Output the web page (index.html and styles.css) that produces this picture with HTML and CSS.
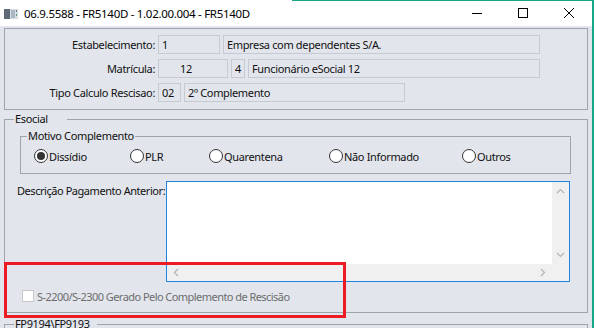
FILE: index.html
```html
<!DOCTYPE html>
<html lang="pt-BR">
<head>
    <meta charset="UTF-8">
    <title>FR5140D</title>
    <link rel="stylesheet" href="styles.css">
</head>
<body>
    <div class="window">
        <div class="titlebar">
            <svg class="app-icon" width="14" height="10" viewBox="0 0 14 10">
                <rect x="0" y="0" width="14" height="10" fill="#d9dde3"/>
                <rect x="0" y="0" width="6" height="10" fill="#5f6b78"/>
                <rect x="7" y="1" width="4" height="8" fill="#a9b7c6"/>
                <rect x="12" y="1" width="1" height="2" fill="#6d7c8c"/>
                <rect x="12" y="5" width="1" height="2" fill="#4fa06e"/>
            </svg>
            <span class="title">06.9.5588 - FR5140D - 1.02.00.004 - FR5140D</span>
            <div class="win-controls">
                <span class="ctl">
                    <svg width="10" height="10" viewBox="0 0 10 10"><path d="M0 5.5H10" stroke="#000" stroke-width="1"/></svg>
                </span>
                <span class="ctl">
                    <svg width="10" height="10" viewBox="0 0 10 10"><rect x="0.5" y="0.5" width="9" height="9" fill="none" stroke="#000" stroke-width="1"/></svg>
                </span>
                <span class="ctl">
                    <svg width="10" height="10" viewBox="0 0 10 10"><path d="M0 0L10 10M10 0L0 10" stroke="#000" stroke-width="1"/></svg>
                </span>
            </div>
        </div>

        <div class="client">
            <div class="panel-top">
                <div class="row">
                    <span class="lbl">Estabelecimento:</span>
                    <div class="field w-estab">1</div>
                    <div class="field w-empresa">Empresa com dependentes S/A.</div>
                </div>
                <div class="row">
                    <span class="lbl">Matrícula:</span>
                    <div class="field w-matric num">12</div>
                    <div class="field w-seq">4</div>
                    <div class="field w-func">Funcionário eSocial 12</div>
                </div>
                <div class="row">
                    <span class="lbl">Tipo Calculo Rescisao:</span>
                    <div class="field w-tipo">02</div>
                    <div class="field w-tipodesc">2º Complemento</div>
                </div>
            </div>

            <fieldset class="group esocial">
                <legend class="cap-esocial">Esocial</legend>

                <fieldset class="group motivo">
                    <legend class="cap-motivo">Motivo Complemento</legend>
                    <div class="radios">
                        <label class="radio checked"><span class="circle"></span>Dissídio</label>
                        <label class="radio"><span class="circle"></span>PLR</label>
                        <label class="radio"><span class="circle"></span>Quarentena</label>
                        <label class="radio"><span class="circle"></span>Não Informado</label>
                        <label class="radio"><span class="circle"></span>Outros</label>
                    </div>
                </fieldset>

                <div class="desc-row">
                    <span class="desc-label">Descrição Pagamento Anterior:</span>
                    <div class="memo">
                        <div class="memo-text"></div>
                        <div class="vscroll">
                            <svg width="9" height="6" viewBox="0 0 9 6"><path d="M1 5L4.5 1.5L8 5" fill="none" stroke="#b4b4b4" stroke-width="1.2"/></svg>
                            <svg width="9" height="6" viewBox="0 0 9 6"><path d="M1 1L4.5 4.5L8 1" fill="none" stroke="#b4b4b4" stroke-width="1.2"/></svg>
                        </div>
                        <div class="hscroll">
                            <svg width="6" height="9" viewBox="0 0 6 9"><path d="M5 1L1.5 4.5L5 8" fill="none" stroke="#b4b4b4" stroke-width="1.2"/></svg>
                            <svg width="6" height="9" viewBox="0 0 6 9"><path d="M1 1L4.5 4.5L1 8" fill="none" stroke="#b4b4b4" stroke-width="1.2"/></svg>
                        </div>
                        <div class="corner"></div>
                    </div>
                </div>

                <div class="check-row">
                    <span class="checkbox"></span>
                    <span class="check-label">S-2200/S-2300 Gerado Pelo Complemento de Rescisão</span>
                </div>
            </fieldset>

            <fieldset class="group fp">
                <legend class="cap-fp">FP9194\FP9193</legend>
            </fieldset>
        </div>
    </div>

    <!-- destaque vermelho sobre o checkbox -->
    <div class="highlight"></div>
</body>
</html>
```

FILE: styles.css
```css
:root {
    --form-bg: #e2e5ec;
    --group-line: #9ea4ae;
    --field-line: #c6cad1;
    --teal: #17a689;
}
* {
    margin: 0;
    padding: 0;
    box-sizing: border-box;
}
body {
    font-family: 'Noto Sans', 'Open Sans', sans-serif;
    font-size: 11px;
    letter-spacing: -0.35px;
    color: #111;
    background: #fff;
    width: 597px;
    height: 328px;
    overflow: hidden;
    position: relative;
}
.window {
    width: 594px;
    height: 328px;
    border-right: 2px solid var(--teal);
    display: flex;
    flex-direction: column;
}
.titlebar {
    height: 26px;
    display: flex;
    align-items: center;
    background: linear-gradient(var(--teal), var(--teal)) no-repeat right top / 300px 1px, #fff;
}
.app-icon {
    margin-left: 4px;
    margin-right: 6px;
    margin-top: 2px;
}
.title {
    font-size: 11.5px;
    letter-spacing: -0.3px;
    color: #000;
    white-space: nowrap;
}
.win-controls {
    margin-left: auto;
    display: flex;
    height: 100%;
}
.ctl {
    width: 46px;
    height: 26px;
    display: flex;
    align-items: center;
    justify-content: center;
}
.client {
    flex: 1;
    background: var(--form-bg);
    padding: 2px 4px 0 4px;
    overflow: hidden;
}
.panel-top {
    border: 1px solid var(--group-line);
    padding: 6px 0 7px 0;
    display: flex;
    flex-direction: column;
    gap: 5px;
}
.row {
    display: flex;
    align-items: center;
    height: 19px;
    gap: 3px;
}
.lbl {
    width: 150px;
    text-align: right;
    white-space: nowrap;
}
.field {
    height: 19px;
    line-height: 17px;
    border: 1px solid var(--field-line);
    padding-left: 3px;
    white-space: nowrap;
    overflow: hidden;
}
.w-estab { width: 62px; }
.w-empresa { width: 317px; }
.w-matric { width: 70px; }
.num { padding-left: 21px; }
.w-seq { width: 14px; padding-left: 3px; }
.w-func { width: 292px; }
.w-tipo { width: 23px; }
.w-tipodesc { width: 221px; }

.group {
    border: 1px solid var(--group-line);
    min-width: 0;
    padding: 0;
}
.group legend {
    line-height: 16px;
    padding: 0 0 0 1px;
    white-space: nowrap;
}
.esocial {
    margin-top: 1px;
}
.cap-esocial {
    margin-left: 9px;
    width: 53px;
}
.motivo {
    margin: 1px 16px 0 15px;
}
.cap-motivo {
    margin-left: 6px;
    width: 108px;
}
.radios {
    display: flex;
    align-items: center;
    height: 20px;
    margin: 2px 0 7px 13px;
}
.radio {
    display: flex;
    align-items: center;
    gap: 1px;
    white-space: nowrap;
}
.radio:nth-child(1) { width: 96px; }
.radio:nth-child(2) { width: 79px; }
.radio:nth-child(3) { width: 120px; }
.radio:nth-child(4) { width: 133px; }
.circle {
    width: 14px;
    height: 14px;
    border: 1px solid #333;
    border-radius: 50%;
    background: #fff;
    display: flex;
    align-items: center;
    justify-content: center;
}
.radio.checked .circle::after {
    content: '';
    width: 8px;
    height: 8px;
    border-radius: 50%;
    background: #333;
}
.desc-row {
    display: flex;
    margin-top: 7px;
    padding-left: 12px;
}
.desc-label {
    width: 149px;
    padding-top: 2px;
    line-height: 16px;
    letter-spacing: -0.45px;
    white-space: nowrap;
}
.memo {
    width: 404px;
    height: 101px;
    border: 1px solid #1e86e0;
    background: #fff;
    display: grid;
    grid-template-columns: 1fr 17px;
    grid-template-rows: 1fr 17px;
}
.vscroll {
    background: #f0f0f0;
    display: flex;
    flex-direction: column;
    justify-content: space-between;
    align-items: center;
    padding: 6px 0;
}
.hscroll {
    background: #f0f0f0;
    display: flex;
    justify-content: space-between;
    align-items: center;
    padding: 0 6px;
}
.corner {
    background: #f0f0f0;
}
.check-row {
    display: flex;
    align-items: center;
    height: 16px;
    margin-top: 6px;
    margin-bottom: 8px;
    padding-left: 17px;
}
.checkbox {
    width: 12px;
    height: 12px;
    background: #fff;
    border: 1px solid #c8c8c8;
    margin-right: 3px;
}
.check-label {
    color: #6d6d6d;
    letter-spacing: -0.55px;
    white-space: nowrap;
}
.fp {
    margin-top: 3px;
    height: 40px;
}
.cap-fp {
    margin-left: 9px;
    width: 83px;
}
.highlight {
    position: absolute;
    left: 4px;
    top: 262px;
    width: 342px;
    height: 56px;
    border: 3px solid #ed1c24;
}
```
